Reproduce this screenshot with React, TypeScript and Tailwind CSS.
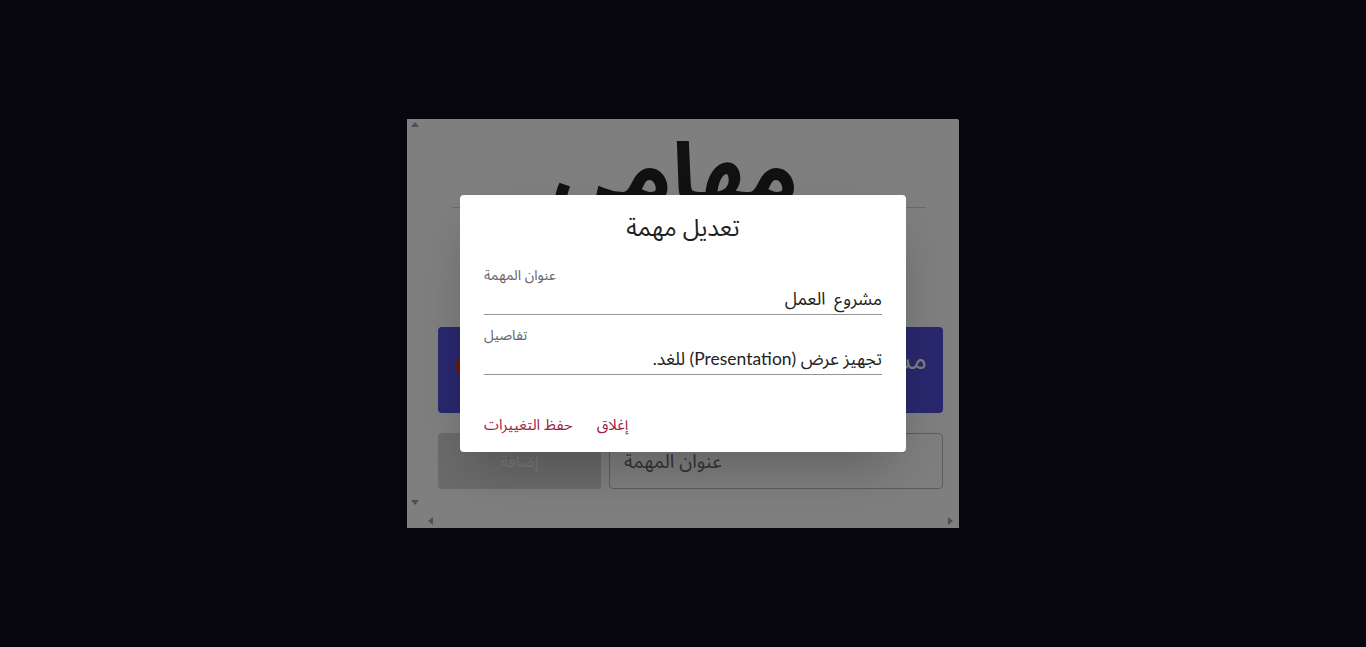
import React from "react";

const arabic = { fontFamily: "Lato, 'Noto Sans Arabic', 'DejaVu Sans', sans-serif" };

function Arrow({ dir }: { dir: "up" | "down" | "left" | "right" }) {
  const pts = {
    up: "0,5 4,0 8,5",
    down: "0,0 8,0 4,5",
    left: "5,0 5,8 0,4",
    right: "0,0 0,8 5,4",
  }[dir];
  const vertical = dir === "up" || dir === "down";
  return (
    <svg width={vertical ? 8 : 5} height={vertical ? 5 : 8} viewBox={vertical ? "0 0 8 5" : "0 0 5 8"}>
      <polygon points={pts} fill="#a0a0a0" />
    </svg>
  );
}

function Field({ label, value }: { label: string; value: string }) {
  return (
    <div className="mt-2 mb-1">
      <div className="h-4 text-[14px] leading-4 text-[#666]">{label}</div>
      <div dir="rtl" className="h-8 pt-1 border-b border-[#949494] text-[17.5px] leading-[23px] text-[#222] whitespace-pre">
        {value}
      </div>
    </div>
  );
}

export default function App() {
  return (
    <div className="h-[647px] w-full bg-[#07060f] flex items-center justify-center" style={arabic}>
      <div className="relative w-[552px] h-[409px] bg-white overflow-hidden rounded-tr-[3px]">
        <div className="grid grid-cols-[15px_1fr] grid-rows-[394px_15px] h-full">
          {/* vertical scrollbar */}
          <div className="flex flex-col justify-between items-center pt-[3px] pb-[8px]">
            <Arrow dir="up" />
            <Arrow dir="down" />
          </div>

          {/* page content */}
          <div dir="rtl" className="overflow-hidden">
            <div className="h-[88px] flex justify-center pr-[30px]">
              <div className="text-[86px] font-bold leading-none text-[#222] mt-[9px]">مهامي</div>
            </div>
            <div className="h-px bg-[#d4d4d4] mr-[33px] ml-[30px]"></div>
            <div className="h-[119px]"></div>
            <div className="mx-4 h-[86px] rounded-[4px] bg-[#5250dc] flex items-center justify-between pr-4 pl-[18px]">
              <div className="text-white text-[28px] leading-9 -mt-6">مشروع العمل</div>
              <div className="w-[30px] h-[30px] rounded-full bg-[#d4321a] -mt-2"></div>
            </div>
            <div className="mx-4 mt-5 flex gap-2 h-14">
              <div dir="ltr" className="flex-1 border border-[#bbb] rounded-[4px] flex items-center pl-[14px] text-[19px] text-[#6a6a6a]">
                عنوان المهمة
              </div>
              <div className="w-[163px] rounded-[4px] bg-[#d6d6d6] flex items-center justify-center text-[16px] text-[#f4f4f4]">
                إضافة
              </div>
            </div>
          </div>

          <div></div>
          {/* horizontal scrollbar */}
          <div className="flex justify-between items-center pl-[6px] pr-[6px]">
            <Arrow dir="left" />
            <Arrow dir="right" />
          </div>
        </div>

        {/* modal backdrop */}
        <div className="absolute inset-0 bg-black/50"></div>

        {/* dialog */}
        <div className="absolute left-[53px] top-[76px] w-[446px] bg-white rounded-[4px] shadow-2xl">
          <div className="h-16 flex items-center justify-center text-[24px] text-[#1f1f1f]">تعديل مهمة</div>
          <div className="px-6 pb-[21px] flex flex-col">
            <Field label="عنوان المهمة" value="مشروع  العمل" />
            <Field label="تفاصيل" value="تجهيز عرض (Presentation) للغد." />
          </div>
          <div className="p-2 pl-4 flex gap-2">
            <button className="h-9 px-2 pb-[4px] text-[15px] text-[#9e1b45]">حفظ التغييرات</button>
            <button className="h-9 px-2 pb-[4px] text-[15px] text-[#9e1b45]">إغلاق</button>
          </div>
        </div>
      </div>
    </div>
  );
}
